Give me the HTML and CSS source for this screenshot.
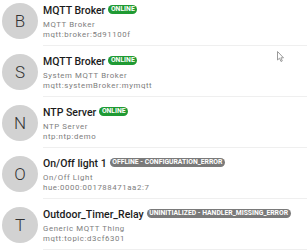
FILE: index.html
```html
<!DOCTYPE html>
<html lang="en">
<head>
    <meta charset="UTF-8">
    <meta name="viewport" content="width=device-width, initial-scale=1.0">
    <title>Things</title>
    <link rel="stylesheet" href="styles.css">
</head>
<body>
<ul class="thing-list">
    <li class="thing">
        <div class="avatar">B</div>
        <div class="thing-body">
            <div class="thing-title">MQTT Broker <span class="badge online">ONLINE</span></div>
            <div class="thing-sub first">MQTT Broker</div>
            <div class="thing-sub">mqtt:broker:5d91100f</div>
        </div>
    </li>
    <li class="thing">
        <div class="avatar">S</div>
        <div class="thing-body">
            <div class="thing-title">MQTT Broker <span class="badge online">ONLINE</span></div>
            <div class="thing-sub first">System MQTT Broker</div>
            <div class="thing-sub">mqtt:systemBroker:mymqtt</div>
        </div>
    </li>
    <li class="thing">
        <div class="avatar">N</div>
        <div class="thing-body">
            <div class="thing-title">NTP Server <span class="badge online">ONLINE</span></div>
            <div class="thing-sub first">NTP Server</div>
            <div class="thing-sub">ntp:ntp:demo</div>
        </div>
    </li>
    <li class="thing">
        <div class="avatar">O</div>
        <div class="thing-body">
            <div class="thing-title">On/Off light 1 <span class="badge offline">OFFLINE - CONFIGURATION_ERROR</span></div>
            <div class="thing-sub first">On/Off Light</div>
            <div class="thing-sub">hue:0000:001788471aa2:7</div>
        </div>
    </li>
    <li class="thing">
        <div class="avatar">T</div>
        <div class="thing-body">
            <div class="thing-title">Outdoor_Timer_Relay <span class="badge offline">UNINITIALIZED - HANDLER_MISSING_ERROR</span></div>
            <div class="thing-sub first">Generic MQTT Thing</div>
            <div class="thing-sub">mqtt:topic:d3cf6301</div>
        </div>
    </li>
</ul>
<svg class="cursor" width="8" height="12" viewBox="0 0 8 12">
    <path d="M0.5 0.5 L0.5 9 L2.5 7.2 L4 10.5 L5.3 9.9 L3.9 6.8 L6.5 6.8 Z" fill="#fff" stroke="#9a9a9a" stroke-width="1"/>
</svg>
</body>
</html>
```

FILE: styles.css
```css
body {
    margin: 0;
    background: #fff;
    font-family: Roboto, "Liberation Sans", sans-serif;
    overflow: hidden;
    position: relative;
    height: 250px;
}

.thing-list {
    list-style: none;
    margin: -5px 0 0 0;
    padding: 0;
}

.thing {
    display: flex;
    align-items: center;
    height: 51px;
}

.avatar {
    flex: none;
    width: 36px;
    height: 36px;
    margin-left: 2px;
    border-radius: 50%;
    background: #d2d2d2;
    color: #333;
    font-size: 17px;
    font-weight: 300;
    display: flex;
    align-items: center;
    justify-content: center;
}

.thing-body {
    flex: 1;
    align-self: stretch;
    margin-left: 5px;
    padding-top: 10px;
    border-bottom: 1px solid #efefef;
    box-sizing: border-box;
    white-space: nowrap;
}

.thing-title {
    font-size: 10.5px;
    font-weight: 500;
    line-height: 12px;
    color: #1b1b1b;
    display: flex;
    align-items: flex-start;
}

.badge {
    display: inline-block;
    margin-left: 3px;
    height: 9px;
    line-height: 9px;
    padding: 0 2.6px;
    border-radius: 5px;
    font-size: 6.8px;
    font-weight: 700;
    color: #fff;
}

.online {
    background: #1f9a33;
}

.offline {
    background: #7a7a7a;
}

.thing-sub {
    font-size: 7.8px;
    letter-spacing: 0.6px;
    line-height: 10px;
    color: #7d7d7d;
}

.thing-sub.first {
    margin-top: 2.5px;
}

.cursor {
    position: absolute;
    left: 277px;
    top: 51px;
}
```
